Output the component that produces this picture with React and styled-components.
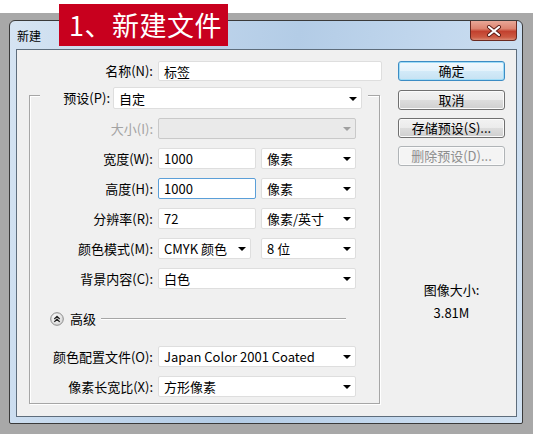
import React from "react";
import styled, { createGlobalStyle } from "styled-components";

const GlobalStyle = createGlobalStyle`
  html, body {
    margin: 0;
    padding: 0;
    background: #fff;
  }
  * {
    box-sizing: border-box;
  }
  body {
    font-family: "Noto Sans CJK SC", "Noto Sans", sans-serif;
    font-size: 13px;
    color: #000;
  }
`;

const Page = styled.div`
  position: relative;
  width: 533px;
  height: 434px;
  padding-top: 13px;
  overflow: hidden;
  background: #fff;
`;

const Stage = styled.div`
  height: 421px;
  padding: 7px 0 0 9px;
  background: #a8a8a8;
`;

const Banner = styled.div`
  position: absolute;
  left: 59px;
  top: 4px;
  width: 169px;
  height: 42px;
  padding-left: 10px;
  background: #c8001e;
  color: #fff;
  font-size: 27px;
  line-height: 42px;
  letter-spacing: 0.5px;
  z-index: 2;
`;

const Window = styled.div`
  width: 514px;
  height: 404px;
  display: flex;
  flex-direction: column;
  padding: 0 5px 6px 6px;
  border: 1px solid #3a3a3a;
  border-radius: 6px 6px 2px 2px;
  background: linear-gradient(
    100deg,
    #d6e4f2 0%,
    #c2d7ed 25%,
    #b3cce6 50%,
    #c3d8ee 75%,
    #d2e2f2 100%
  );
`;

const TitleBar = styled.div`
  height: 28px;
  display: flex;
  justify-content: space-between;
  align-items: flex-start;
`;

const Title = styled.span`
  padding-left: 1px;
  font-size: 12px;
  line-height: 30px;
  color: #000;
`;

const CloseButton = styled.div`
  width: 47px;
  height: 20px;
  display: flex;
  align-items: center;
  justify-content: center;
  border: 1px solid #6a2a22;
  border-top: none;
  border-radius: 0 0 4px 4px;
  background: linear-gradient(
    #e8a797 0%,
    #dc8470 40%,
    #c2412f 55%,
    #cc5a43 85%,
    #d98a75 100%
  );
`;

const Content = styled.div`
  flex: 1;
  display: flex;
  padding-top: 11px;
  border: 1px solid #5e6d7c;
  background: #f0f0f0;
`;

const LeftCol = styled.div`
  width: 381px;
  flex-shrink: 0;
`;

const RightCol = styled.div`
  width: 107px;
  display: flex;
  flex-direction: column;
`;

const Row = styled.div`
  display: flex;
  align-items: center;
  height: ${(p) => p.$h || 21}px;
`;

const Label = styled.span`
  width: ${(p) => p.$w}px;
  flex-shrink: 0;
  margin-right: ${(p) => (p.$mr === undefined ? 5 : p.$mr)}px;
  text-align: right;
  white-space: nowrap;
  line-height: 20px;
  color: ${(p) => (p.$disabled ? "#a3a3a3" : "#000")};
`;

const Field = styled.div`
  width: ${(p) => p.$w}px;
  height: ${(p) => p.$h || 21}px;
  flex-shrink: 0;
  display: flex;
  align-items: center;
  justify-content: space-between;
  margin-left: ${(p) => p.$ml || 0}px;
  padding: 0 4px 0 5px;
  border: 1px solid
    ${(p) => (p.$focused ? "#5b9fd8" : p.$disabled ? "#c9c9c9" : "#dedede")};
  border-radius: 2px;
  background: ${(p) => (p.$disabled ? "#eaeaea" : "#fff")};
  line-height: 19px;
  white-space: nowrap;
`;

const Arrow = styled.span`
  width: 0;
  height: 0;
  border-left: 4px solid transparent;
  border-right: 4px solid transparent;
  border-top: 4px solid ${(p) => (p.$disabled ? "#a0a0a0" : "#000")};
  margin-top: 1px;
`;

const Group = styled.div`
  width: 351px;
  margin: 14px 0 0 12px;
  padding-bottom: 6px;
  border: 1px solid #a6a6a6;
  box-shadow: inset 1px 1px 0 #fff, 1px 1px 0 #fff;
`;

const Legend = styled.div`
  display: flex;
  align-items: center;
  width: fit-content;
  height: 22px;
  margin: -9px 0 0 10px;
  padding-right: 6px;
  background: #f0f0f0;
`;

const GroupRows = styled.div`
  display: flex;
  flex-direction: column;
  gap: 9px;
  margin-top: ${(p) => p.$mt}px;
`;

const AdvRow = styled.div`
  display: flex;
  align-items: center;
  height: 14px;
  margin-top: 23px;
  padding: 0 33px 0 20px;
`;

const AdvText = styled.span`
  margin-left: 6px;
  line-height: 14px;
`;

const AdvLine = styled.div`
  flex: 1;
  margin-left: 5px;
  border-top: 1px solid #a6a6a6;
  border-bottom: 1px solid #fff;
`;

const Button = styled.div`
  width: 107px;
  height: 20px;
  margin-top: ${(p) => p.$mt || 0}px;
  border: 1px solid ${(p) =>
    p.$primary ? "#3c8cc4" : p.$disabled ? "#b0b4b7" : "#707070"};
  border-radius: 3px;
  box-shadow: ${(p) =>
    p.$primary ? "inset 0 0 0 1px #9fdcf7" : "inset 0 0 0 1px #fbfbfb"};
  background: ${(p) =>
    p.$primary
      ? "linear-gradient(#f1f8fd 0%, #e4f2fb 50%, #d3eaf8 51%, #c6e2f3 100%)"
      : p.$disabled
      ? "#f4f4f4"
      : "linear-gradient(#f2f2f2 0%, #ebebeb 50%, #dddddd 51%, #cfcfcf 100%)"};
  color: ${(p) => (p.$disabled ? "#8e8e8e" : "#000")};
  text-align: center;
  line-height: 18px;
  white-space: nowrap;
`;

const Info = styled.div`
  margin-top: 114px;
  text-align: center;
  line-height: 20px;
`;

const InfoValue = styled.div`
  margin-top: 3px;
`;

const CloseIcon = () => (
  <svg width="16" height="12" viewBox="0 0 16 12">
    <path d="M3 2 L13 10 M13 2 L3 10" stroke="#5a1a14" strokeWidth="4" strokeLinecap="round" />
    <path d="M3 2 L13 10 M13 2 L3 10" stroke="#fff" strokeWidth="2.2" strokeLinecap="round" />
  </svg>
);

const CollapseIcon = () => (
  <svg width="14" height="14" viewBox="0 0 14 14">
    <defs>
      <radialGradient id="adv" cx="40%" cy="35%" r="70%">
        <stop offset="0%" stopColor="#ffffff" />
        <stop offset="100%" stopColor="#d4d4d4" />
      </radialGradient>
    </defs>
    <circle cx="7" cy="7" r="6.3" fill="url(#adv)" stroke="#8c8c8c" />
    <path d="M4.3 7 L7 4.3 L9.7 7 M4.3 9.9 L7 7.2 L9.7 9.9" fill="none" stroke="#222" strokeWidth="1.3" />
  </svg>
);

const Select = ({ w, h, ml, disabled, children }) => (
  <Field $w={w} $h={h} $ml={ml} $disabled={disabled}>
    <span>{children}</span>
    <Arrow $disabled={disabled} />
  </Field>
);

const App = () => {
  return (
    <>
      <GlobalStyle />
      <Page>
        <Banner>1、新建文件</Banner>
        <Stage>
          <Window>
            <TitleBar>
              <Title>新建</Title>
              <CloseButton>
                <CloseIcon />
              </CloseButton>
            </TitleBar>
            <Content>
              <LeftCol>
                <Row $h={20}>
                  <Label $w={136}>名称(N):</Label>
                  <Field $w={224} $h={20}>标签</Field>
                </Row>
                <Group>
                  <Legend>
                    <Label $w={70} $mr={3}>预设(P):</Label>
                    <Select w={249} h={22}>自定</Select>
                  </Legend>
                  <GroupRows $mt={9}>
                    <Row>
                      <Label $w={123} $disabled>大小(I):</Label>
                      <Select w={198} disabled></Select>
                    </Row>
                    <Row>
                      <Label $w={123}>宽度(W):</Label>
                      <Field $w={98}>1000</Field>
                      <Select w={95} ml={5}>像素</Select>
                    </Row>
                    <Row>
                      <Label $w={123}>高度(H):</Label>
                      <Field $w={98} $focused>1000</Field>
                      <Select w={95} ml={5}>像素</Select>
                    </Row>
                    <Row>
                      <Label $w={123}>分辨率(R):</Label>
                      <Field $w={98}>72</Field>
                      <Select w={95} ml={5}>像素/英寸</Select>
                    </Row>
                    <Row>
                      <Label $w={123}>颜色模式(M):</Label>
                      <Select w={93}>CMYK 颜色</Select>
                      <Select w={95} ml={10}>8 位</Select>
                    </Row>
                    <Row>
                      <Label $w={123}>背景内容(C):</Label>
                      <Select w={198}>白色</Select>
                    </Row>
                  </GroupRows>
                  <AdvRow>
                    <CollapseIcon />
                    <AdvText>高级</AdvText>
                    <AdvLine />
                  </AdvRow>
                  <GroupRows $mt={20}>
                    <Row>
                      <Label $w={123}>颜色配置文件(O):</Label>
                      <Select w={198}>Japan Color 2001 Coated</Select>
                    </Row>
                    <Row>
                      <Label $w={123}>像素长宽比(X):</Label>
                      <Select w={198}>方形像素</Select>
                    </Row>
                  </GroupRows>
                </Group>
              </LeftCol>
              <RightCol>
                <Button $primary>确定</Button>
                <Button $mt={9}>取消</Button>
                <Button $mt={8}>存储预设(S)...</Button>
                <Button $mt={8} $disabled>删除预设(D)...</Button>
                <Info>
                  <div>图像大小:</div>
                  <InfoValue>3.81M</InfoValue>
                </Info>
              </RightCol>
            </Content>
          </Window>
        </Stage>
      </Page>
    </>
  );
};

export default App;
